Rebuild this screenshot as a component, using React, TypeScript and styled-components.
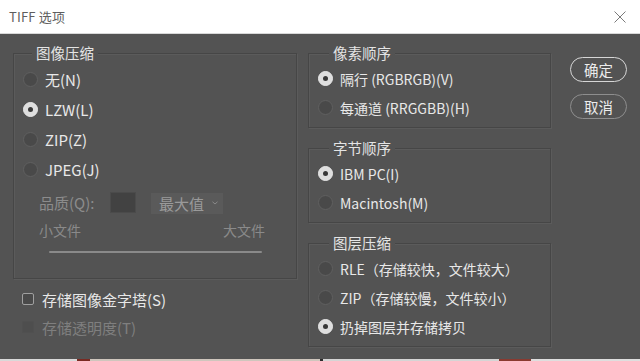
import React from 'react';
import styled, { createGlobalStyle } from 'styled-components';

const GlobalStyle = createGlobalStyle`
  html, body {
    margin: 0;
    padding: 0;
    background: #535353;
  }
  body {
    font-family: 'Noto Sans CJK SC', 'Noto Sans', sans-serif;
    -webkit-font-smoothing: antialiased;
  }
`;

const BODY_BG = '#535353';

const Window = styled.div`
  width: 640px;
  height: 361px;
  display: flex;
  flex-direction: column;
  overflow: hidden;
`;

const TitleBar = styled.div`
  height: 34px;
  flex: none;
  background: #ffffff;
  border-bottom: 1px solid #d8d8d8;
  box-sizing: border-box;
  display: flex;
  align-items: center;
  justify-content: space-between;
  padding: 0 14px 0 9px;
`;

const TitleText = styled.span`
  font-size: 13px;
  color: #5e5e5e;
  letter-spacing: 0.2px;
`;

const CloseButton = styled.span`
  width: 12px;
  height: 12px;
  display: inline-flex;
`;

const Body = styled.div`
  flex: 1;
  background: ${BODY_BG};
  display: flex;
  padding: 19px 0 0 13px;
  color: #e6e6e6;
`;

const Strip = styled.div`
  height: 2px;
  flex: none;
  background: linear-gradient(
    90deg,
    #d9d9d9 0 12%,
    #7a2a22 12% 14%,
    #cfc6bd 14% 50%,
    #2b2b2b 50% 50.4%,
    #d5d5d5 50.4% 78%,
    #8a3a30 78% 83%,
    #dedede 83%
  );
`;

const LeftColumn = styled.div`
  width: 284px;
  flex: none;
  display: flex;
  flex-direction: column;
`;

const RightColumn = styled.div`
  width: 243px;
  flex: none;
  margin-left: 11px;
  display: flex;
  flex-direction: column;
  gap: 20px;
`;

const ButtonColumn = styled.div`
  width: 57px;
  flex: none;
  margin-left: 19px;
  padding-top: 4px;
  display: flex;
  flex-direction: column;
  gap: 12px;
`;

const Group = styled.div<{ $padBottom: number; $fontSize: number }>`
  border: 1px solid #464646;
  box-shadow: 1px 1px 0 #5b5b5b, inset 1px 1px 0 #5b5b5b;
  padding: 0 10px ${(p) => p.$padBottom}px 9px;
  font-size: ${(p) => p.$fontSize}px;
`;

const Legend = styled.div<{ $indent: number }>`
  width: max-content;
  margin: -11px 0 0 ${(p) => p.$indent}px;
  padding: 0 4px;
  line-height: 20px;
  font-size: 14.5px;
  background: ${BODY_BG};
  color: #e4e4e4;
`;

const List = styled.div<{ $padTop: number }>`
  padding-top: ${(p) => p.$padTop}px;
  display: flex;
  flex-direction: column;
`;

const RadioRow = styled.div<{ $height: number; $disabled?: boolean }>`
  height: ${(p) => p.$height}px;
  display: flex;
  align-items: center;
  gap: 7px;
  color: ${(p) => (p.$disabled ? '#8a8a8a' : '#e8e8e8')};
  white-space: nowrap;
`;

const RadioDot = styled.span<{ $checked?: boolean }>`
  width: 15px;
  height: 15px;
  box-sizing: border-box;
  border-radius: 50%;
  flex: none;
  display: inline-flex;
  align-items: center;
  justify-content: center;
  background: ${(p) => (p.$checked ? '#dedede' : '#494949')};
  border: 1px solid ${(p) => (p.$checked ? '#e8e8e8' : '#606060')};

  &::after {
    content: '';
    width: 5px;
    height: 5px;
    border-radius: 50%;
    background: #383838;
    display: ${(p) => (p.$checked ? 'block' : 'none')};
  }
`;

const QualityRow = styled.div`
  margin: 7px 0 0 16px;
  height: 22px;
  display: flex;
  align-items: center;
  color: #8c8c8c;
  font-size: 15px;
`;

const QualityLabel = styled.span`
  width: 71px;
`;

const NumberBox = styled.span`
  width: 26px;
  height: 21px;
  box-sizing: border-box;
  background: #424242;
  border: 1px solid #4b4b4b;
  margin-right: 15px;
`;

const SelectBox = styled.span`
  width: 72px;
  height: 21px;
  margin-top: 2px;
  box-sizing: border-box;
  background: #5a5a5a;
  color: #9a9a9a;
  display: flex;
  align-items: center;
  justify-content: space-between;
  padding: 0 5px 0 8px;
  line-height: 21px;
`;

const SizeLabels = styled.div`
  margin: 6px 21px 0 16px;
  height: 22px;
  line-height: 22px;
  display: flex;
  justify-content: space-between;
  color: #8a8a8a;
  font-size: 14px;
`;

const SliderTrack = styled.div`
  margin: 10px 24px 0 26px;
  height: 2px;
  background: #8a8a8a;
  border-radius: 1px;
`;

const CheckList = styled.div`
  margin-top: 6px;
  padding-left: 9px;
  display: flex;
  flex-direction: column;
`;

const CheckRow = styled.div<{ $disabled?: boolean }>`
  height: 28px;
  display: flex;
  align-items: center;
  gap: 8px;
  font-size: 15px;
  color: ${(p) => (p.$disabled ? '#7f7f7f' : '#e8e8e8')};
`;

const CheckBox = styled.span<{ $disabled?: boolean }>`
  width: 12px;
  height: 12px;
  box-sizing: border-box;
  border-radius: 2px;
  flex: none;
  background: ${(p) => (p.$disabled ? '#4e4e4e' : '#4a4a4a')};
  border: 1px solid ${(p) => (p.$disabled ? '#505050' : '#a0a0a0')};
`;

const PillButton = styled.button<{ $primary?: boolean }>`
  width: 57px;
  height: 25px;
  border-radius: 13px;
  box-sizing: border-box;
  background: transparent;
  border: 1.5px solid ${(p) => (p.$primary ? '#d6d6d6' : '#8e8e8e')};
  color: #ececec;
  font-family: inherit;
  font-size: 14.5px;
  line-height: 20px;
  padding: 0;
  cursor: pointer;
`;

interface RadioItem {
  label: string;
  checked?: boolean;
}

const RadioList: React.FC<{ items: RadioItem[]; height: number; padTop: number }> = ({
  items,
  height,
  padTop,
}) => (
  <List $padTop={padTop}>
    {items.map((item) => (
      <RadioRow key={item.label} $height={height}>
        <RadioDot $checked={item.checked} />
        <span>{item.label}</span>
      </RadioRow>
    ))}
  </List>
);

const compression: RadioItem[] = [
  { label: '无(N)' },
  { label: 'LZW(L)', checked: true },
  { label: 'ZIP(Z)' },
  { label: 'JPEG(J)' },
];

const pixelOrder: RadioItem[] = [
  { label: '隔行 (RGBRGB)(V)', checked: true },
  { label: '每通道 (RRGGBB)(H)' },
];

const byteOrder: RadioItem[] = [
  { label: 'IBM PC(I)', checked: true },
  { label: 'Macintosh(M)' },
];

const layerCompression: RadioItem[] = [
  { label: 'RLE（存储较快，文件较大）' },
  { label: 'ZIP（存储较慢，文件较小）' },
  { label: '扔掉图层并存储拷贝', checked: true },
];

export default function App() {
  return (
    <>
      <GlobalStyle />
      <Window>
        <TitleBar>
          <TitleText>TIFF 选项</TitleText>
          <CloseButton>
            <svg width="12" height="12" viewBox="0 0 12 12">
              <path d="M0.5 0.5 L11.5 11.5 M11.5 0.5 L0.5 11.5" stroke="#7a7a7a" strokeWidth="1" />
            </svg>
          </CloseButton>
        </TitleBar>
        <Body>
          <LeftColumn>
            <Group $padBottom={25} $fontSize={15}>
              <Legend $indent={9}>图像压缩</Legend>
              <RadioList items={compression} height={30} padTop={1} />
              <QualityRow>
                <QualityLabel>品质(Q):</QualityLabel>
                <NumberBox />
                <SelectBox>
                  最大值
                  <svg width="6" height="4" viewBox="0 0 6 4">
                    <path d="M0.5 0.8 L3 3 L5.5 0.8" stroke="#8a8a8a" strokeWidth="1" fill="none" />
                  </svg>
                </SelectBox>
              </QualityRow>
              <SizeLabels>
                <span>小文件</span>
                <span>大文件</span>
              </SizeLabels>
              <SliderTrack />
            </Group>
            <CheckList>
              <CheckRow>
                <CheckBox />
                存储图像金字塔(S)
              </CheckRow>
              <CheckRow $disabled>
                <CheckBox $disabled />
                存储透明度(T)
              </CheckRow>
            </CheckList>
          </LeftColumn>
          <RightColumn>
            <Group $padBottom={5} $fontSize={14}>
              <Legend $indent={11}>像素顺序</Legend>
              <RadioList items={pixelOrder} height={29} padTop={1} />
            </Group>
            <Group $padBottom={5} $fontSize={14}>
              <Legend $indent={11}>字节顺序</Legend>
              <RadioList items={byteOrder} height={29} padTop={1} />
            </Group>
            <Group $padBottom={5} $fontSize={14}>
              <Legend $indent={11}>图层压缩</Legend>
              <RadioList items={layerCompression} height={29} padTop={1} />
            </Group>
          </RightColumn>
          <ButtonColumn>
            <PillButton $primary>确定</PillButton>
            <PillButton>取消</PillButton>
          </ButtonColumn>
        </Body>
        <Strip />
      </Window>
    </>
  );
}
